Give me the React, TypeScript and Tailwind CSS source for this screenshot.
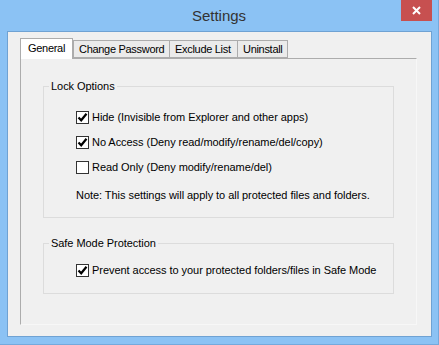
import React from "react";

type Opt = { label: string; checked: boolean };

const lockOptions: Opt[] = [
  { label: "Hide (Invisible from Explorer and other apps)", checked: true },
  { label: "No Access (Deny read/modify/rename/del/copy)", checked: true },
  { label: "Read Only (Deny modify/rename/del)", checked: false },
];

function CheckBox({ checked }: { checked: boolean }) {
  return (
    <span className="w-[13px] h-[13px] shrink-0 border border-[#333333] bg-white flex items-center justify-center">
      {checked && (
        <svg width="11" height="11" viewBox="0 0 11 11">
          <path d="M1.5 5.5 L4.2 8.3 L9.5 1.8" fill="none" stroke="#000" strokeWidth="2.2" />
        </svg>
      )}
    </span>
  );
}

function Row({ label, checked }: Opt) {
  return (
    <div className="h-[25px] flex items-center gap-[3px]">
      <CheckBox checked={checked} />
      <span className="whitespace-nowrap">{label}</span>
    </div>
  );
}

const tabs = ["General", "Change Password", "Exclude List", "Uninstall"];

export default function App() {
  return (
    <div className="w-[439px] h-[345px] bg-[#8bc2f4] border-r border-b border-[#74a9dc] flex flex-col font-['Liberation_Sans',sans-serif] text-[11px] tracking-[-0.05px] text-black">
      {/* title bar */}
      <div className="h-[31px] shrink-0 relative flex items-center justify-center">
        <span className="text-[15px] tracking-normal text-[#333] leading-none -mt-[1px]">Settings</span>
        <div className="absolute right-[6px] top-0 w-[31px] h-[21px] bg-[#c75050] flex items-center justify-center">
          <svg width="9" height="9" viewBox="0 0 9 9">
            <path d="M1 1 L8 8 M8 1 L1 8" stroke="#fff" strokeWidth="2" />
          </svg>
        </div>
      </div>

      {/* client area */}
      <div className="ml-[7px] mr-[6px] h-[306px] bg-[#f0f0f0] border border-[#6fa2d3] pl-[12px] pt-[6px]">
        {/* tab strip */}
        <div className="flex items-end h-[20px] whitespace-nowrap tracking-[-0.3px]">
          {tabs.map((t, i) =>
            i === 0 ? (
              <div
                key={t}
                className="h-[21px] w-[53px] -mb-[1px] bg-white border border-b-0 border-[#acacac] flex items-center pl-[7px] pb-[2px] relative z-10"
              >
                {t}
              </div>
            ) : (
              <div
                key={t}
                className={
                  "h-[18px] bg-[#ebebeb] border border-[#acacac] flex items-center pl-[5px] -ml-[1px] " +
                  (i === 1 ? "w-[97px] ml-0" : i === 2 ? "w-[69px]" : "w-[51px]")
                }
              >
                {t}
              </div>
            )
          )}
        </div>

        {/* tab panel */}
        <div className="w-[397px] h-[267px] border-t border-l border-[#acacac] border-r border-r-[#f7f7f7] border-b border-b-[#f7f7f7] pl-[22px] pt-[19px]">
          <fieldset className="w-[351px] min-w-0 border border-[#dcdcdc] pb-[10px]">
            <legend className="ml-[5px] px-[2px] leading-[16px]">Lock Options</legend>
            <div className="pt-[11px] pl-[32px]">
              {lockOptions.map((o) => (
                <Row key={o.label} {...o} />
              ))}
              <div className="h-[24px] mt-[3px] flex items-center whitespace-nowrap">
                Note: This settings will apply to all protected files and folders.
              </div>
            </div>
          </fieldset>

          <fieldset className="mt-[17px] w-[351px] min-w-0 border border-[#dcdcdc] pb-[10px]">
            <legend className="ml-[5px] px-[2px] leading-[16px]">Safe Mode Protection</legend>
            <div className="pt-[7px] pl-[32px]">
              <Row label="Prevent access to your protected folders/files in Safe Mode" checked />
            </div>
          </fieldset>
        </div>
      </div>
    </div>
  );
}
